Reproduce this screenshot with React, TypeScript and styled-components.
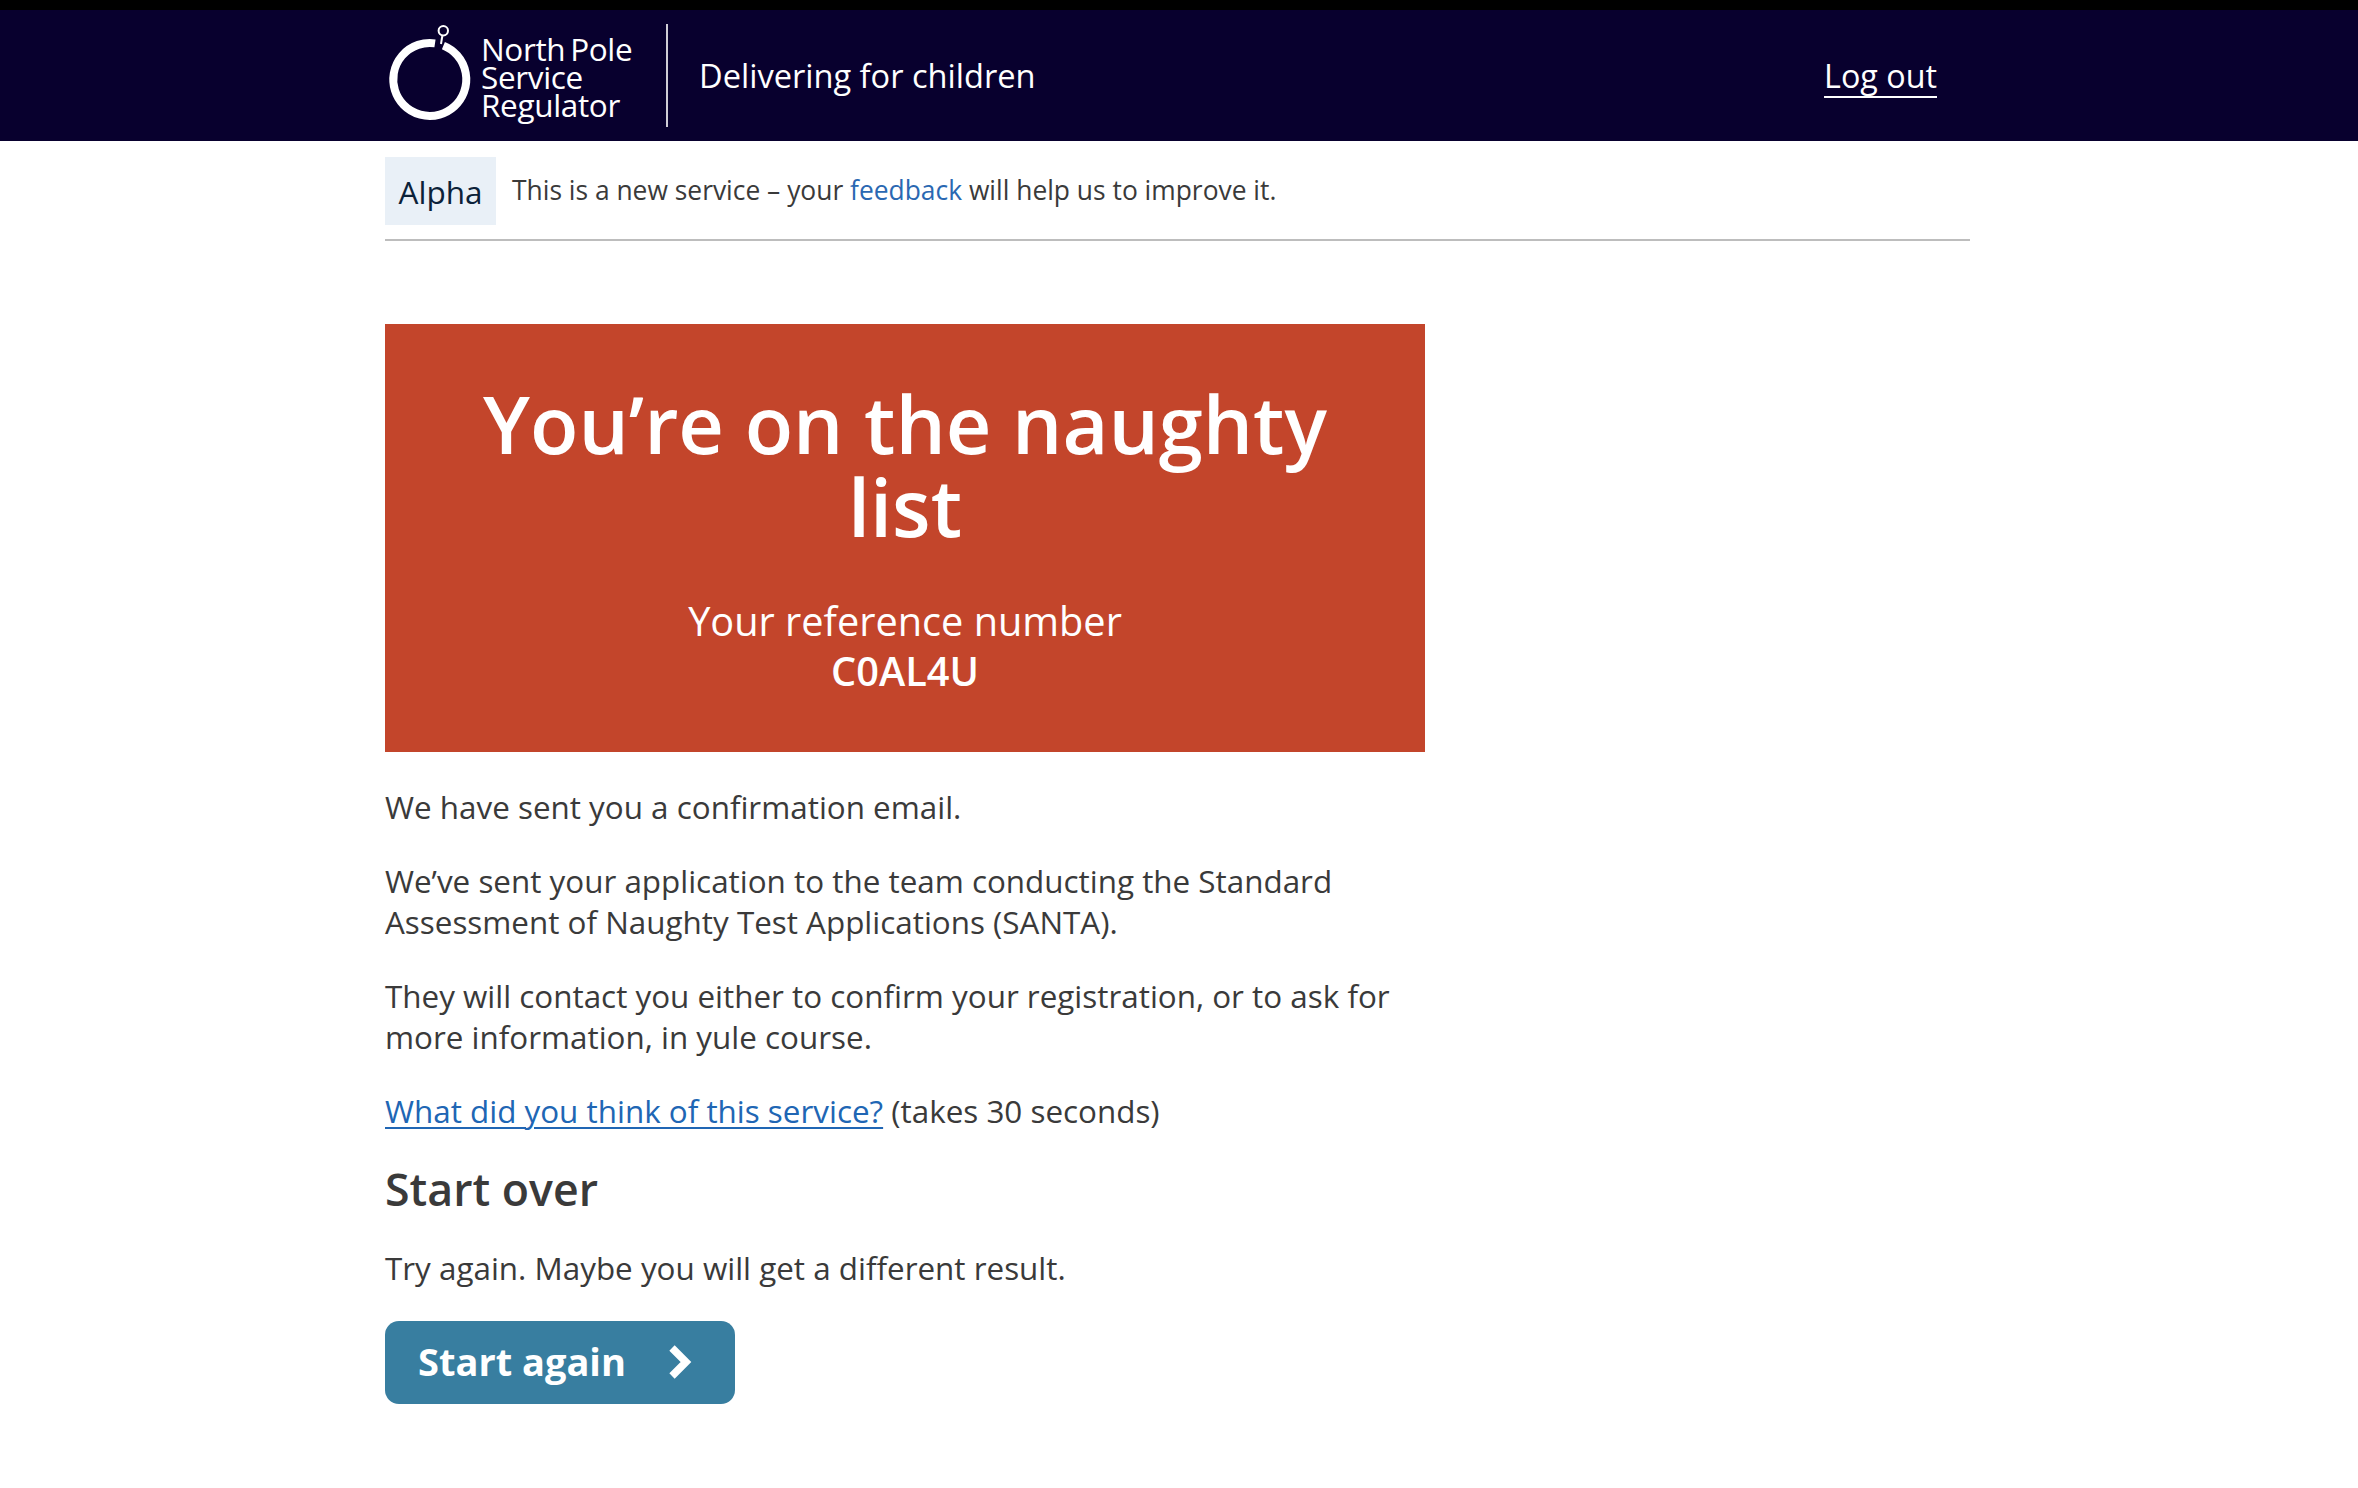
import React from "react";
import styled, { createGlobalStyle } from "styled-components";

const Global = createGlobalStyle`
  html, body { margin: 0; padding: 0; background: #fff; }
  body { font-family: "Open Sans", "Noto Sans", sans-serif; color: #3a3a3a; }
`;

const Header = styled.header`
  height: 131px;
  background: #08002e;
  border-top: 10px solid #000;
  color: #fff;
`;

const HeaderInner = styled.div`
  width: 1585px;
  margin-left: 385px;
  height: 100%;
  display: flex;
  align-items: center;
`;

const Logo = styled.svg`
  width: 92px;
  height: 105px;
  flex: none;
`;

const LogoText = styled.div`
  font-size: 31.5px;
  font-weight: 500;
  line-height: 28px;
  letter-spacing: -0.35px;
  word-spacing: -3px;
  margin-left: 4px;
  width: 185px;
  margin-top: 2px;
`;

const Divider = styled.div`
  width: 2px;
  height: 103px;
  background: #cfccd6;
  margin-right: 31px;
`;

const Tagline = styled.div`
  font-size: 32.6px;
  font-weight: 500;
  flex: 1;
`;

const LogOut = styled.a`
  font-size: 32.3px;
  font-weight: 500;
  color: #fff;
  text-decoration: underline;
  text-decoration-thickness: 2px;
  text-underline-offset: 8px;
  margin-right: 33px;
  margin-bottom: 1px;
`;

const Main = styled.main`
  width: 1585px;
  margin-left: 385px;
`;

const Phase = styled.div`
  display: flex;
  align-items: center;
  gap: 16px;
  padding: 16px 0 14px;
  border-bottom: 2px solid #bdbdbd;
  font-size: 26.4px;
`;

const Tag = styled.span`
  width: 111px;
  height: 68px;
  background: #e9f0f7;
  color: #0b2239;
  font-size: 31.5px;
  display: flex;
  align-items: center;
  justify-content: center;
`;

const PhaseText = styled.span`
  margin-bottom: 3px;
`;

const FeedbackLink = styled.a`
  color: #2a68b2;
  text-decoration: none;
`;

const Column = styled.div`
  width: 1040px;
  padding-top: 83px;
`;

const Panel = styled.section`
  background: #c3452b;
  color: #fff;
  height: 428px;
  box-sizing: border-box;
  padding: 57.5px 40px 0;
  text-align: center;
`;

const PanelTitle = styled.h1`
  margin: 0;
  font-size: 79.3px;
  line-height: 83px;
  font-weight: 600;
`;

const PanelBody = styled.div`
  margin-top: 48px;
  font-size: 39.7px;
  line-height: 50px;
`;

const Reference = styled.strong`
  display: block;
  font-weight: 600;
`;

const Para = styled.p`
  margin: 32px 0 0;
  font-size: 31.4px;
  line-height: 41.5px;
`;

const FirstPara = styled(Para)`
  margin-top: 34px;
`;

const TextLink = styled.a`
  color: #2066b4;
  text-decoration: underline;
  text-decoration-thickness: 2px;
  text-underline-offset: 4px;
`;

const SubHeading = styled.h2`
  margin: 32px 0 0;
  font-size: 44.7px;
  line-height: 52px;
  font-weight: 600;
`;

const Button = styled.button`
  margin-top: 32px;
  width: 350px;
  height: 83px;
  background: #387ea0;
  color: #fff;
  border: 0;
  border-radius: 14px;
  padding: 0 42px 3px 33px;
  display: flex;
  align-items: center;
  justify-content: space-between;
  font-family: inherit;
  font-size: 38px;
  font-weight: 700;
`;

const Chevron = styled.svg`
  width: 24px;
  height: 34px;
  flex: none;
  margin-bottom: -3px;
`;

export default function App() {
  return (
    <>
      <Global />
      <Header>
        <HeaderInner>
          <Logo viewBox="0 0 92 105" fill="none">
            <path
              d="M50 20.34 A36.5 36.5 0 1 0 58.4 22.6"
              stroke="#fff"
              strokeWidth="8"
            />
            <path d="M56 21 L57.3 13" stroke="#fff" strokeWidth="2" />
            <circle cx="58.3" cy="7.7" r="4.7" stroke="#fff" strokeWidth="2" />
          </Logo>
          <LogoText>
            North Pole
            <br />
            Service
            <br />
            Regulator
          </LogoText>
          <Divider />
          <Tagline>Delivering for children</Tagline>
          <LogOut href="#">Log out</LogOut>
        </HeaderInner>
      </Header>
      <Main>
        <Phase>
          <Tag>Alpha</Tag>
          <PhaseText>
            This is a new service – your <FeedbackLink href="#">feedback</FeedbackLink> will help us to improve it.
          </PhaseText>
        </Phase>
        <Column>
          <Panel>
            <PanelTitle>You’re on the naughty list</PanelTitle>
            <PanelBody>
              Your reference number
              <Reference>C0AL4U</Reference>
            </PanelBody>
          </Panel>
          <FirstPara>We have sent you a confirmation email.</FirstPara>
          <Para>
            We’ve sent your application to the team conducting the Standard Assessment of Naughty Test Applications (SANTA).
          </Para>
          <Para>
            They will contact you either to confirm your registration, or to ask for more information, in yule course.
          </Para>
          <Para>
            <TextLink href="#">What did you think of this service?</TextLink> (takes 30 seconds)
          </Para>
          <SubHeading>Start over</SubHeading>
          <Para>Try again. Maybe you will get a different result.</Para>
          <Button>
            Start again
            <Chevron viewBox="0 0 24 34" fill="none">
              <path d="M3 3 L17 17 L3 31" stroke="#fff" strokeWidth="7.5" />
            </Chevron>
          </Button>
        </Column>
      </Main>
    </>
  );
}
